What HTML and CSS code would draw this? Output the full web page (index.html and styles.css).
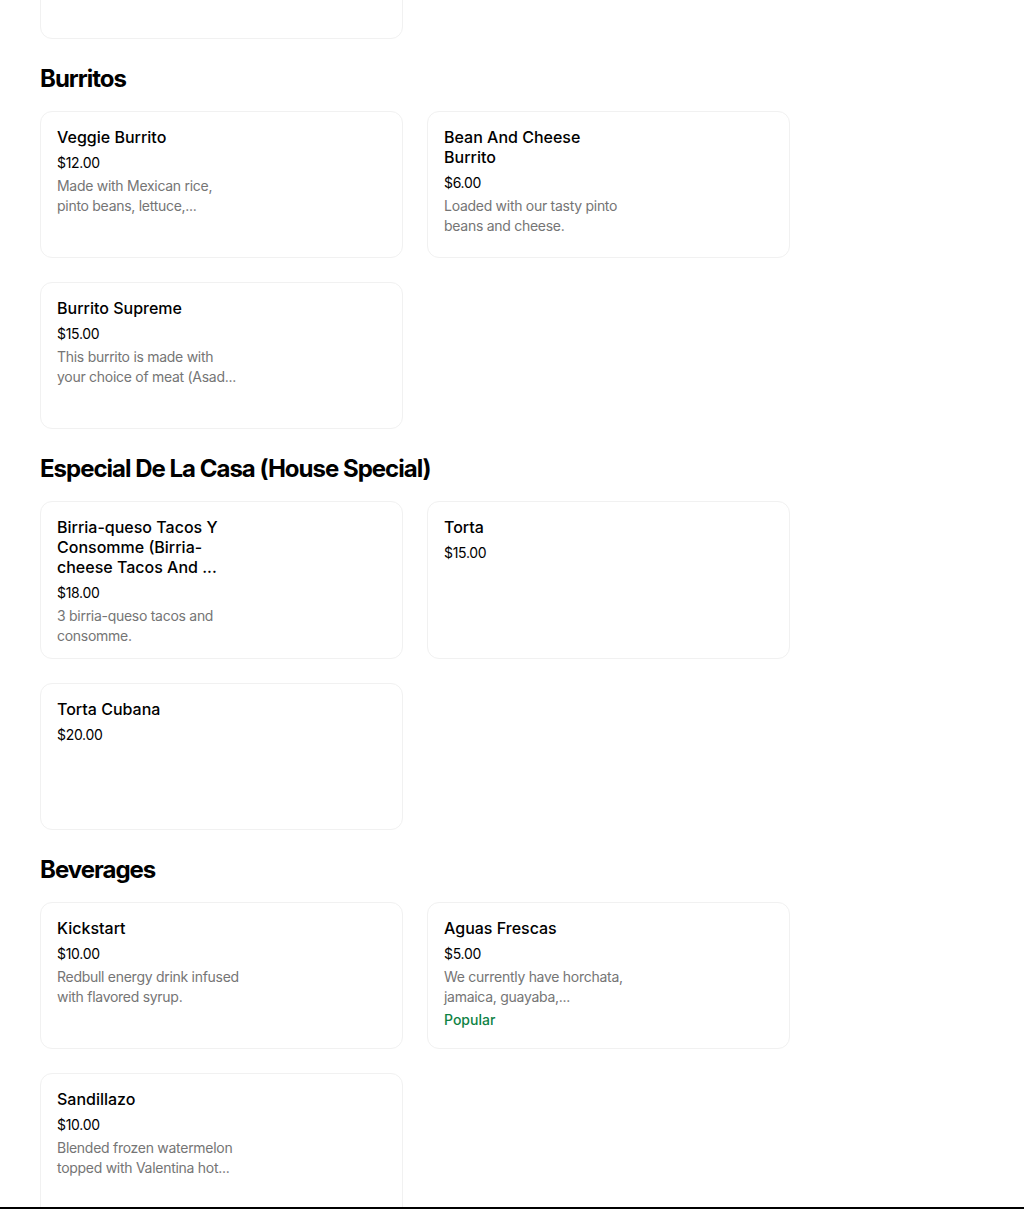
FILE: index.html
```html
<!DOCTYPE html>
<html lang="en">
<head>
<meta charset="utf-8">
<title>Menu</title>
<link rel="stylesheet" href="styles.css">
</head>
<body>
<main class="menu">
  <section class="section section-partial">
    <div class="grid">
      <div class="card"></div>
    </div>
  </section>

  <section class="section">
    <h2 class="section-title">Burritos</h2>
    <div class="grid">
      <div class="card">
        <div class="info">
          <div class="name">Veggie Burrito</div>
          <div class="price">$12.00</div>
          <div class="desc">Made with Mexican rice,<br>pinto beans, lettuce,...</div>
        </div>
      </div>
      <div class="card">
        <div class="info">
          <div class="name">Bean And Cheese<br>Burrito</div>
          <div class="price">$6.00</div>
          <div class="desc">Loaded with our tasty pinto<br>beans and cheese.</div>
        </div>
      </div>
      <div class="card">
        <div class="info">
          <div class="name">Burrito Supreme</div>
          <div class="price">$15.00</div>
          <div class="desc">This burrito is made with<br>your choice of meat (Asad...</div>
        </div>
      </div>
    </div>
  </section>

  <section class="section">
    <h2 class="section-title">Especial De La Casa (House Special)</h2>
    <div class="grid">
      <div class="card">
        <div class="info">
          <div class="name">Birria-queso Tacos Y<br>Consomme (Birria-<br>cheese Tacos And ...</div>
          <div class="price">$18.00</div>
          <div class="desc">3 birria-queso tacos and<br>consomme.</div>
        </div>
      </div>
      <div class="card">
        <div class="info">
          <div class="name">Torta</div>
          <div class="price">$15.00</div>
        </div>
      </div>
      <div class="card">
        <div class="info">
          <div class="name">Torta Cubana</div>
          <div class="price">$20.00</div>
        </div>
      </div>
    </div>
  </section>

  <section class="section">
    <h2 class="section-title">Beverages</h2>
    <div class="grid">
      <div class="card">
        <div class="info">
          <div class="name">Kickstart</div>
          <div class="price">$10.00</div>
          <div class="desc">Redbull energy drink infused<br>with flavored syrup.</div>
        </div>
      </div>
      <div class="card">
        <div class="info">
          <div class="name">Aguas Frescas</div>
          <div class="price">$5.00</div>
          <div class="desc">We currently have horchata,<br>jamaica, guayaba,...</div>
          <div class="badge">Popular</div>
        </div>
      </div>
      <div class="card">
        <div class="info">
          <div class="name">Sandillazo</div>
          <div class="price">$10.00</div>
          <div class="desc">Blended frozen watermelon<br>topped with Valentina hot...</div>
        </div>
      </div>
    </div>
  </section>
</main>
<div class="bottom-bar"></div>
</body>
</html>
```

FILE: styles.css
```css
* { box-sizing: border-box; }

html, body {
  margin: 0;
  padding: 0;
  background: #ffffff;
}

body {
  font-family: Inter, "Noto Sans", "Liberation Sans", sans-serif;
  color: #000000;
  overflow: hidden;
  height: 1209px;
}

.menu {
  padding: 0 40px;
  margin-top: -108px;
}

.section {
  display: flex;
  flex-direction: column;
}

.section-title {
  margin: 24px 0 16px;
  font-size: 24px;
  line-height: 32px;
  font-weight: 700;
  letter-spacing: -1px;
  color: #000;
}

.grid {
  display: grid;
  grid-template-columns: 363px 363px;
  column-gap: 24px;
  row-gap: 24px;
}

.card {
  min-height: 147px;
  border: 1px solid #f1f1f1;
  border-radius: 12px;
  padding: 15px 16px 12px;
  background: #fff;
}

.info {
  width: 200px;
}

.name {
  font-size: 16px;
  line-height: 20px;
  font-weight: 500;
  color: #000;
}

.price {
  margin-top: 6px;
  font-size: 14px;
  line-height: 20px;
  font-weight: 400;
  color: #000;
  letter-spacing: -0.3px;
}

.desc {
  margin-top: 3px;
  font-size: 14px;
  line-height: 20px;
  color: #757575;
  letter-spacing: -0.28px;
  white-space: nowrap;
}

.badge {
  margin-top: 3px;
  font-size: 14px;
  line-height: 20px;
  font-weight: 500;
  color: #0e8345;
}

.bottom-bar {
  position: fixed;
  left: 0;
  right: 0;
  bottom: 0;
  height: 2px;
  background: #000;
}
```
